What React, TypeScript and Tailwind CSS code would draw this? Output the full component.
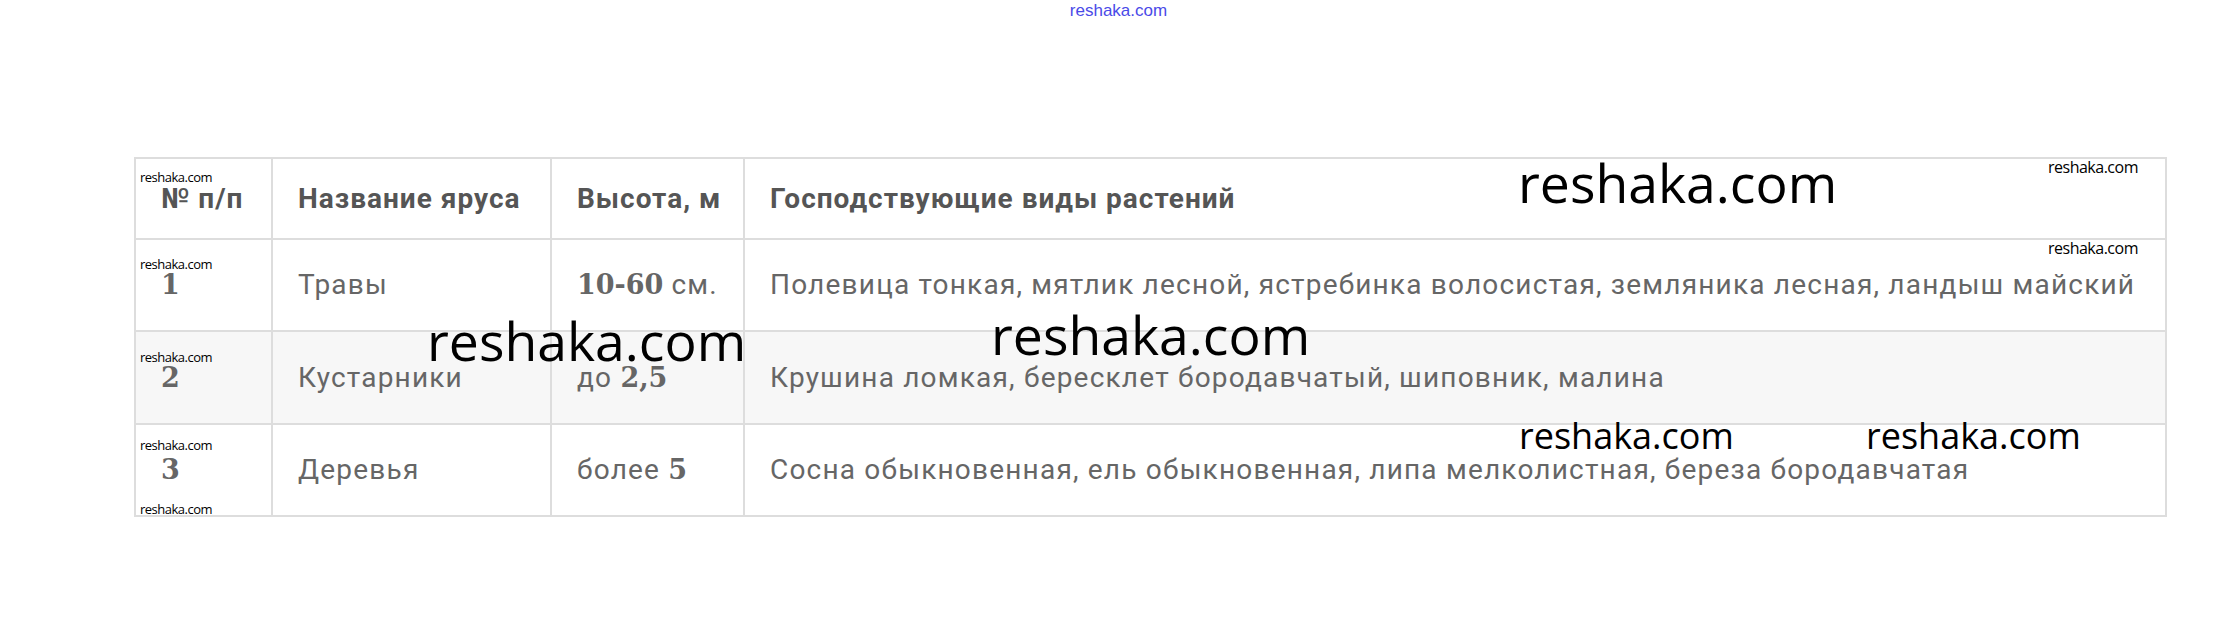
import React from "react";

const num = "font-['DejaVu_Serif',serif] font-bold text-[27px] tracking-[0px]";

export default function App() {
  const cell = "border-2 border-[#dddddd] pl-[25px] align-middle";
  const small = "absolute text-[13px] leading-none tracking-[-0.5px]";
  return (
    <div className="relative w-[2233px] h-[632px] bg-white overflow-hidden font-['Roboto',sans-serif]">
      <div className="flex justify-center pt-[1px]">
        <span className="ml-[4px] text-[17px] leading-[20px] text-[#4a4ae8] font-['Liberation_Sans',sans-serif]">
          reshaka.com
        </span>
      </div>

      <table className="ml-[134px] mt-[136px] border-collapse border-2 border-[#dddddd] text-[#666] text-[28px] leading-none tracking-[1.2px]">
        <colgroup>
          <col className="w-[137px]" />
          <col className="w-[279px]" />
          <col className="w-[193px]" />
          <col className="w-[1422px]" />
        </colgroup>
        <tbody>
          <tr className="h-[81px] font-bold text-[#555] tracking-[1px]">
            <td className={cell}>№ п/п</td>
            <td className={cell}>Название яруса</td>
            <td className={cell}>Высота, м</td>
            <td className={cell}>Господствующие виды растений</td>
          </tr>
          <tr className="h-[92px]">
            <td className={cell}><span className={num}>1</span></td>
            <td className={cell}>Травы</td>
            <td className={cell}><span className={num}>10-60</span> см.</td>
            <td className={cell}>Полевица тонкая, мятлик лесной, ястребинка волосистая, земляника лесная, ландыш майский</td>
          </tr>
          <tr className="h-[93px] bg-[#f7f7f7]">
            <td className={cell}><span className={num}>2</span></td>
            <td className={cell}>Кустарники</td>
            <td className={cell}>до <span className={num}>2,5</span></td>
            <td className={cell}>Крушина ломкая, бересклет бородавчатый, шиповник, малина</td>
          </tr>
          <tr className="h-[92px]">
            <td className={cell}><span className={num}>3</span></td>
            <td className={cell}>Деревья</td>
            <td className={cell}>более <span className={num}>5</span></td>
            <td className={cell}>Сосна обыкновенная, ель обыкновенная, липа мелколистная, береза бородавчатая</td>
          </tr>
        </tbody>
      </table>

      <div className="absolute inset-0 pointer-events-none font-['Open_Sans',sans-serif] text-black">
        <span className={`${small} left-[140px] top-[171px]`}>reshaka.com</span>
        <span className={`${small} left-[140px] top-[258px]`}>reshaka.com</span>
        <span className={`${small} left-[140px] top-[351px]`}>reshaka.com</span>
        <span className={`${small} left-[140px] top-[439px]`}>reshaka.com</span>
        <span className={`${small} left-[140px] top-[503px]`}>reshaka.com</span>
        <span className="absolute left-[2048px] top-[159px] text-[16px] leading-none tracking-[-0.5px]">reshaka.com</span>
        <span className="absolute left-[2048px] top-[240px] text-[16px] leading-none tracking-[-0.5px]">reshaka.com</span>

        <span className="absolute left-[1518px] top-[156px] text-[53.5px] leading-none">reshaka.com</span>
        <span className="absolute left-[427px] top-[314px] text-[53.5px] leading-none">reshaka.com</span>
        <span className="absolute left-[991px] top-[308px] text-[53.5px] leading-none">reshaka.com</span>
        <span className="absolute left-[1519px] top-[418px] text-[36px] leading-none">reshaka.com</span>
        <span className="absolute left-[1866px] top-[418px] text-[36px] leading-none">reshaka.com</span>
      </div>
    </div>
  );
}
